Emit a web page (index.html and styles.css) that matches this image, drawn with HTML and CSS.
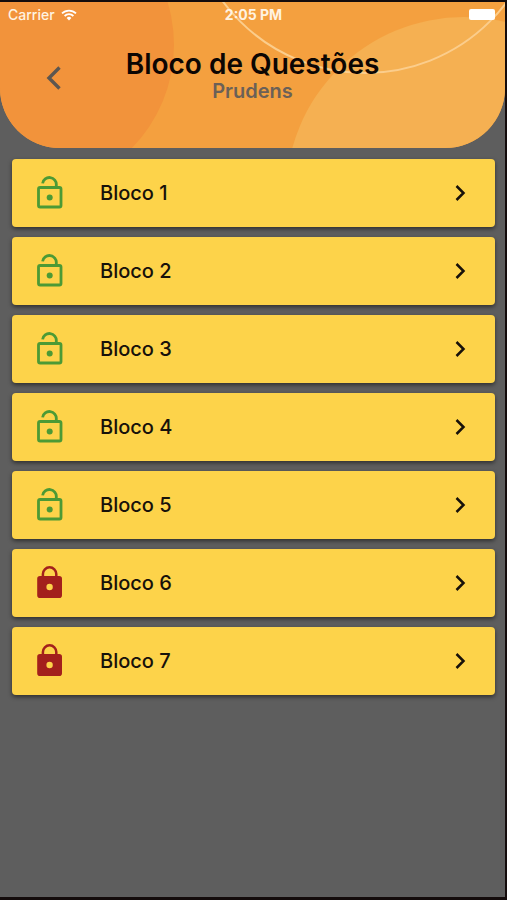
FILE: index.html
```html
<!DOCTYPE html>
<html lang="pt-BR">
<head>
<meta charset="utf-8">
<meta name="viewport" content="width=device-width, initial-scale=1">
<title>Bloco de Questões</title>
<link rel="stylesheet" href="styles.css">
</head>
<body>
<svg class="sprite" aria-hidden="true">
  <symbol id="open" viewBox="0 0 26 34">
    <rect x="1.5" y="11.5" width="22.5" height="19.5" rx="1.6" fill="none" stroke="currentColor" stroke-width="2.8"/>
    <path d="M5.6 7.4a6.900 6.900 0 0 1 13.700 1.600v2.500" fill="none" stroke="currentColor" stroke-width="2.800"/>
    <circle cx="12.700" cy="21.500" r="3" fill="currentColor"/>
  </symbol>
  <symbol id="closed" viewBox="0 0 26 34">
    <path fill="currentColor" fill-rule="evenodd" d="M3 10h19.200a2.800 2.800 0 0 1 2.800 2.800v16.400a2.800 2.800 0 0 1-2.800 2.800H3a2.800 2.800 0 0 1-2.800-2.800V12.800a2.800 2.800 0 0 1 2.800-2.800zM12.600 17.800a3.200 3.200 0 1 0 0 6.400a3.200 3.200 0 1 0 0-6.400z"/>
    <path d="M5.900 11V8a6.700 6.700 0 0 1 13.400 0v3" fill="none" stroke="currentColor" stroke-width="2.500"/>
  </symbol>
  <symbol id="next" viewBox="0 0 12 18">
    <path d="M2.500 2l7 7-7 7" fill="none" stroke="currentColor" stroke-width="2.500"/>
  </symbol>
</svg>
<div class="screen">
  <header class="header">
    <svg class="art" viewBox="0 0 505 146" preserveAspectRatio="none" aria-hidden="true">
      <circle cx="27" cy="43" r="147" fill="#f2933b"/>
      <circle cx="464" cy="193" r="178" fill="#f5b052"/>
      <circle cx="365" cy="-106" r="177" fill="none" stroke="#fbcd8c" stroke-width="2"/>
    </svg>
    <div class="status">
      <span class="carrier">Carrier
        <svg class="wifi" viewBox="0 0 16 12" aria-hidden="true">
          <path d="M1 4.400a10 10 0 0 1 14 0M3.600 7a6.300 6.300 0 0 1 8.800 0" fill="none" stroke="#fff" stroke-width="1.800"/>
          <path d="M5.600 9a3.500 3.500 0 0 1 4.800 0L8 11.600z" fill="#fff"/>
        </svg>
      </span>
      <span class="time">2:05 PM</span>
      <span class="battery"></span>
    </div>
    <div class="bar">
      <button class="back" type="button" aria-label="Voltar">
        <svg viewBox="0 0 16 24" aria-hidden="true"><path d="M13.500 1.500L3 12l10.500 10.500" fill="none" stroke="currentColor" stroke-width="3.400"/></svg>
      </button>
      <div class="titles">
        <h1>Bloco de Questões</h1>
        <p>Prudens</p>
      </div>
    </div>
  </header>
  <main class="list">
    <button class="card" type="button"><svg class="lock"><use href="#open"/></svg><span>Bloco 1</span><svg class="next"><use href="#next"/></svg></button>
    <button class="card" type="button"><svg class="lock"><use href="#open"/></svg><span>Bloco 2</span><svg class="next"><use href="#next"/></svg></button>
    <button class="card" type="button"><svg class="lock"><use href="#open"/></svg><span>Bloco 3</span><svg class="next"><use href="#next"/></svg></button>
    <button class="card" type="button"><svg class="lock"><use href="#open"/></svg><span>Bloco 4</span><svg class="next"><use href="#next"/></svg></button>
    <button class="card" type="button"><svg class="lock"><use href="#open"/></svg><span>Bloco 5</span><svg class="next"><use href="#next"/></svg></button>
    <button class="card" type="button"><svg class="lock locked"><use href="#closed"/></svg><span>Bloco 6</span><svg class="next"><use href="#next"/></svg></button>
    <button class="card" type="button"><svg class="lock locked"><use href="#closed"/></svg><span>Bloco 7</span><svg class="next"><use href="#next"/></svg></button>
  </main>
</div>
</body>
</html>
```
FILE: styles.css
```css
* {
  box-sizing: border-box;
}

body {
  margin: 0;
  font-family: Inter, Roboto, sans-serif;
  color: #17110a;
}

.sprite {
  display: none;
}

.screen {
  min-height: 100vh;
  border: solid #140c0c;
  border-width: 2px 2px 3px 0;
  background: #5e5e5e;
}

.header {
  position: relative;
  overflow: hidden;
  height: 146px;
  border-radius: 0 0 60px 60px;
  background: #f4a03f;
}

.art {
  position: absolute;
  inset: 0;
  width: 100%;
  height: 100%;
}

.status {
  position: relative;
  display: grid;
  grid-template-columns: 1fr auto 1fr;
  align-items: center;
  height: 25px;
  padding: 0 10px 0 8px;
  color: #fff3e2;
  font-size: 14px;
  font-weight: 500;
}

.carrier {
  display: flex;
  align-items: center;
  gap: 6px;
}

.wifi {
  width: 16px;
  height: 12px;
}

.time {
  padding-left: 4px;
  font-weight: 700;
}

.battery {
  justify-self: end;
  width: 26px;
  height: 11px;
  border-radius: 2px;
  background: #fff;
}

.bar {
  position: relative;
  display: grid;
  grid-template-columns: 64px 1fr 64px;
  align-items: end;
  padding-top: 21px;
}

.back {
  display: flex;
  align-items: flex-start;
  justify-self: end;
  width: 18px;
  height: 36px;
  padding: 0;
  border: 0;
  background: none;
  color: #5c5650;
}

.back svg {
  width: 16px;
  height: 24px;
}

.titles {
  text-align: center;
}

h1 {
  margin: 0;
  color: #0c0603;
  font-size: 28px;
  line-height: 32px;
  font-weight: 600;
}

.titles p {
  margin: 0;
  color: #6b6057;
  font-size: 20px;
  line-height: 22px;
  font-weight: 600;
}

.list {
  display: flex;
  flex-direction: column;
  gap: 10px;
  padding: 11px 10px 11px 12px;
}

.card {
  display: flex;
  align-items: center;
  height: 68px;
  padding: 0 29px 0 25px;
  border: 0;
  border-radius: 4px;
  background: #fdd34a;
  box-shadow: 0 2px 4px rgba(0, 0, 0, 0.5);
  color: inherit;
  font: 500 20px/26px Inter, Roboto, sans-serif;
  text-align: left;
}

.card span {
  flex: 1;
  padding-left: 37px;
}

.lock {
  width: 26px;
  height: 34px;
  color: #4c9a35;
}

.locked {
  color: #a3201c;
}

.next {
  width: 12px;
  height: 18px;
}
```
